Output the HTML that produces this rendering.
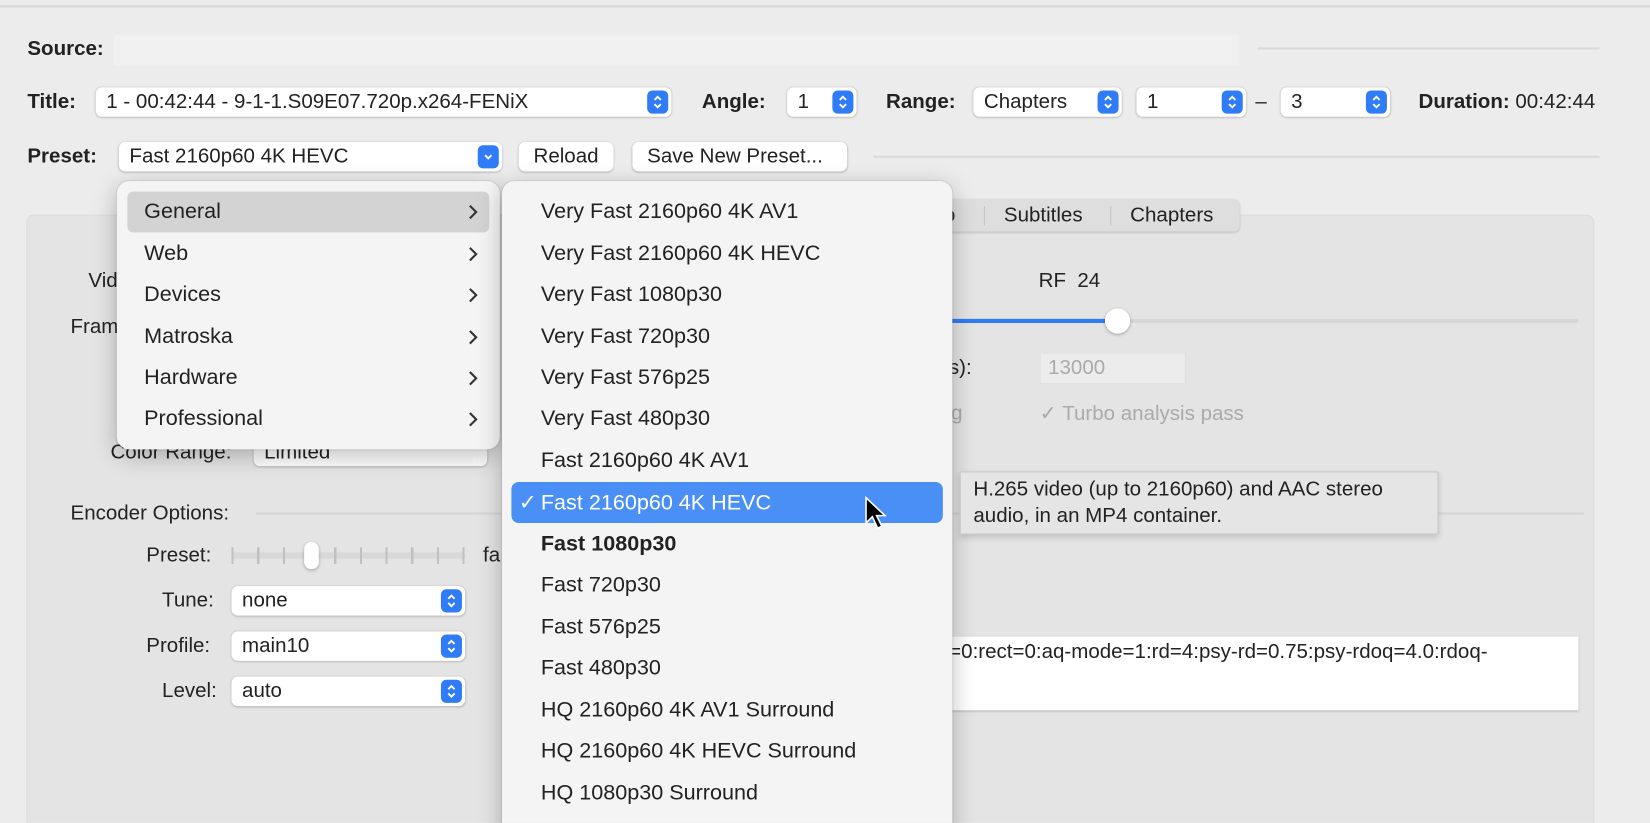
<!DOCTYPE html>
<html><head><meta charset="utf-8"><style>
html,body{margin:0;padding:0;width:1650px;height:823px;overflow:hidden;background:#ececec}
#clip{position:relative;width:1650px;height:823px;overflow:hidden}
#w{position:absolute;left:0;top:0;width:1568px;height:782px;overflow:hidden;transform:scale(1.0523);transform-origin:0 0;font-family:"Liberation Sans",sans-serif;color:#222;font-size:19.5px}
.a{position:absolute;white-space:nowrap}
.b{font-weight:bold}
.lbl{transform:translateY(-50%)}
.box{position:absolute;background:#fff;border-radius:6px;box-shadow:0 0.5px 2px rgba(0,0,0,.25)}
.box span{position:absolute;left:10px;top:50%;transform:translateY(-50%)}
.st{position:absolute;right:3px;top:3px;bottom:3px;width:20px;background:#2f7cf6;border-radius:5px}
.st svg{position:absolute;left:4px;top:50%;transform:translateY(-50%)}
.menu{position:absolute;background:#f4f4f4;border-radius:12px;box-shadow:0 6px 22px rgba(0,0,0,.25),0 0 0 1px rgba(0,0,0,.08)}
.mi{position:absolute;left:0;right:0;height:40px;line-height:40px;font-size:20.5px}
.ch{position:absolute;left:334px;top:13px}
</style></head><body><div id="clip"><div id="w">
<div class="a" style="left:0;top:5px;width:1568px;height:2px;background:#d8d8d8"></div>
<div class="a b lbl" style="left:26px;top:47px">Source:</div>
<div class="a" style="left:108px;top:33px;width:1070px;height:29px;background:#f0f0f0;border-radius:3px"></div>
<div class="a" style="left:1195px;top:45px;width:325px;height:2px;background:#dadada"></div>
<div class="a" style="left:830px;top:148px;width:690px;height:2px;background:#dadada"></div>

<div class="a b lbl" style="left:26px;top:97px">Title:</div>
<div class="box" style="left:91px;top:83px;width:547px;height:28px"><span>1 - 00:42:44 - 9-1-1.S09E07.720p.x264-FENiX</span><div class="st"><svg width="12" height="16" viewBox="0 0 12 16"><path d="M3 6l3-3 3 3M3 10l3 3 3-3" stroke="#fff" stroke-width="1.8" fill="none"/></svg></div></div>
<div class="a b lbl" style="left:667px;top:97px">Angle:</div>
<div class="box" style="left:748px;top:83px;width:66px;height:28px"><span>1</span><div class="st"><svg width="12" height="16" viewBox="0 0 12 16"><path d="M3 6l3-3 3 3M3 10l3 3 3-3" stroke="#fff" stroke-width="1.8" fill="none"/></svg></div></div>
<div class="a b lbl" style="left:842px;top:97px">Range:</div>
<div class="box" style="left:925px;top:83px;width:141px;height:28px"><span>Chapters</span><div class="st"><svg width="12" height="16" viewBox="0 0 12 16"><path d="M3 6l3-3 3 3M3 10l3 3 3-3" stroke="#fff" stroke-width="1.8" fill="none"/></svg></div></div>
<div class="box" style="left:1080px;top:83px;width:104px;height:28px"><span>1</span><div class="st"><svg width="12" height="16" viewBox="0 0 12 16"><path d="M3 6l3-3 3 3M3 10l3 3 3-3" stroke="#fff" stroke-width="1.8" fill="none"/></svg></div></div>
<div class="a lbl" style="left:1193px;top:97px">–</div>
<div class="box" style="left:1217px;top:83px;width:104px;height:28px"><span>3</span><div class="st"><svg width="12" height="16" viewBox="0 0 12 16"><path d="M3 6l3-3 3 3M3 10l3 3 3-3" stroke="#fff" stroke-width="1.8" fill="none"/></svg></div></div>
<div class="a lbl" style="left:1348px;top:97px"><b>Duration:</b> 00:42:44</div>

<div class="a b lbl" style="left:26px;top:149px">Preset:</div>
<div class="box" style="left:113px;top:135px;width:364px;height:28px"><span>Fast 2160p60 4K HEVC</span><div class="st"><svg width="12" height="16" viewBox="0 0 12 16"><path d="M3 6.5l3 3 3-3" stroke="#fff" stroke-width="1.8" fill="none"/></svg></div></div>
<div class="box" style="left:493px;top:135px;width:90px;height:28px"><span style="left:14px">Reload</span></div>
<div class="box" style="left:601px;top:135px;width:204px;height:28px"><span style="left:14px">Save New Preset...</span></div>

<div class="a" style="left:26px;top:205px;width:1488px;height:600px;background:#e4e4e4;border-radius:6px;box-shadow:0 0 0 1px #dcdcdc"></div>
<div class="a" style="left:600px;top:189px;width:578px;height:31px;background:#dedede;border-radius:6px;box-shadow:0 1px 2px rgba(0,0,0,.15)"></div>
<div class="a lbl" style="left:897px;top:205px">o</div>
<div class="a" style="left:935px;top:196px;width:1px;height:18px;background:#c4c4c4"></div>
<div class="a lbl" style="left:954px;top:205px">Subtitles</div>
<div class="a" style="left:1055px;top:196px;width:1px;height:18px;background:#c4c4c4"></div>
<div class="a lbl" style="left:1074px;top:205px">Chapters</div>

<div class="a lbl" style="left:84px;top:267px">Vid</div>
<div class="a lbl" style="left:67px;top:311px">Fram</div>
<div class="a lbl" style="left:105px;top:430px">Color Range:</div>
<div class="box" style="left:241px;top:417px;width:222px;height:26px"><span>Limited</span></div>
<div class="a lbl" style="left:987px;top:267px">RF&nbsp;&nbsp;24</div>
<div class="a" style="left:900px;top:303px;width:162px;height:4px;background:#2f7cf6;border-radius:2px"></div>
<div class="a" style="left:1062px;top:303px;width:438px;height:4px;background:#d6d6d6;border-radius:2px"></div>
<div class="a" style="left:1050px;top:293px;width:24px;height:24px;background:#fff;border-radius:50%;box-shadow:0 1px 3px rgba(0,0,0,.3)"></div>
<div class="a lbl" style="left:880px;top:350px">ops):</div>
<div class="a" style="left:988px;top:335px;width:137px;height:28px;background:#ececec;border:1px solid #e0e0e0"></div>
<div class="a lbl" style="left:996px;top:350px;color:#aaa">13000</div>
<div class="a lbl" style="left:893px;top:393px;color:#aaa">ng</div>
<div class="a lbl" style="left:988px;top:393px;color:#aaa">✓ Turbo analysis pass</div>

<div class="a lbl" style="left:67px;top:488px">Encoder Options:</div>
<div class="a" style="left:243px;top:487px;width:1262px;height:2px;background:#d6d6d6"></div>
<div class="a lbl" style="left:139px;top:528px">Preset:</div>
<div class="a" style="left:220px;top:525px;width:222px;height:6px;background:#d8d8d8;border-radius:3px"></div>
<div class="a" style="left:220px;top:520px;width:222px;height:16px;background:repeating-linear-gradient(90deg,#c0c0c0 0 2px,transparent 2px 24.4px)"></div>
<div class="a" style="left:289px;top:515px;width:14px;height:26px;background:#fff;border-radius:7px;box-shadow:0 1px 3px rgba(0,0,0,.3)"></div>
<div class="a lbl" style="left:459px;top:528px">fa</div>
<div class="a lbl" style="left:154px;top:571px">Tune:</div>
<div class="box" style="left:220px;top:557px;width:222px;height:28px"><span>none</span><div class="st"><svg width="12" height="16" viewBox="0 0 12 16"><path d="M3 6l3-3 3 3M3 10l3 3 3-3" stroke="#fff" stroke-width="1.8" fill="none"/></svg></div></div>
<div class="a lbl" style="left:139px;top:614px">Profile:</div>
<div class="box" style="left:220px;top:600px;width:222px;height:28px"><span>main10</span><div class="st"><svg width="12" height="16" viewBox="0 0 12 16"><path d="M3 6l3-3 3 3M3 10l3 3 3-3" stroke="#fff" stroke-width="1.8" fill="none"/></svg></div></div>
<div class="a lbl" style="left:154px;top:657px">Level:</div>
<div class="box" style="left:220px;top:643px;width:222px;height:28px"><span>auto</span><div class="st"><svg width="12" height="16" viewBox="0 0 12 16"><path d="M3 6l3-3 3 3M3 10l3 3 3-3" stroke="#fff" stroke-width="1.8" fill="none"/></svg></div></div>
<div class="a" style="left:880px;top:605px;width:620px;height:70px;background:#fff;box-shadow:0 1px 2px rgba(0,0,0,.2)"></div>
<div class="a lbl" style="left:902px;top:620px">=0:rect=0:aq-mode=1:rd=4:psy-rd=0.75:psy-rdoq=4.0:rdoq-</div>

<div class="menu" style="left:111px;top:172px;width:364px;height:255px">
<div class="a" style="left:10px;top:10px;width:344px;height:39px;background:#d3d3d3;border-radius:6px"></div>
<div class="mi" style="top:9px"><span style="position:absolute;left:26px">General</span><svg class="ch" width="9" height="15" viewBox="0 0 9 15"><path d="M1.5 1.5l6 6-6 6" stroke="#333" stroke-width="2" fill="none"/></svg></div>
<div class="mi" style="top:49px"><span style="position:absolute;left:26px">Web</span><svg class="ch" width="9" height="15" viewBox="0 0 9 15"><path d="M1.5 1.5l6 6-6 6" stroke="#333" stroke-width="2" fill="none"/></svg></div>
<div class="mi" style="top:88px"><span style="position:absolute;left:26px">Devices</span><svg class="ch" width="9" height="15" viewBox="0 0 9 15"><path d="M1.5 1.5l6 6-6 6" stroke="#333" stroke-width="2" fill="none"/></svg></div>
<div class="mi" style="top:128px"><span style="position:absolute;left:26px">Matroska</span><svg class="ch" width="9" height="15" viewBox="0 0 9 15"><path d="M1.5 1.5l6 6-6 6" stroke="#333" stroke-width="2" fill="none"/></svg></div>
<div class="mi" style="top:167px"><span style="position:absolute;left:26px">Hardware</span><svg class="ch" width="9" height="15" viewBox="0 0 9 15"><path d="M1.5 1.5l6 6-6 6" stroke="#333" stroke-width="2" fill="none"/></svg></div>
<div class="mi" style="top:206px"><span style="position:absolute;left:26px">Professional</span><svg class="ch" width="9" height="15" viewBox="0 0 9 15"><path d="M1.5 1.5l6 6-6 6" stroke="#333" stroke-width="2" fill="none"/></svg></div>
</div>
<div class="menu" style="left:477px;top:172px;width:428px;height:640px">
<div class="a" style="left:9px;top:286px;width:410px;height:39px;background:#4a8ff5;border-radius:7px"></div>
<div class="mi" style="top:9px;padding-left:37px">Very Fast 2160p60 4K AV1</div>
<div class="mi" style="top:49px;padding-left:37px">Very Fast 2160p60 4K HEVC</div>
<div class="mi" style="top:88px;padding-left:37px">Very Fast 1080p30</div>
<div class="mi" style="top:128px;padding-left:37px">Very Fast 720p30</div>
<div class="mi" style="top:167px;padding-left:37px">Very Fast 576p25</div>
<div class="mi" style="top:206px;padding-left:37px">Very Fast 480p30</div>
<div class="mi" style="top:246px;padding-left:37px">Fast 2160p60 4K AV1</div>
<div class="mi" style="top:286px;padding-left:37px;color:#fff"><span style="position:absolute;left:16px">✓</span>Fast 2160p60 4K HEVC</div>
<div class="mi" style="top:325px;padding-left:37px;font-weight:bold">Fast 1080p30</div>
<div class="mi" style="top:364px;padding-left:37px">Fast 720p30</div>
<div class="mi" style="top:404px;padding-left:37px">Fast 576p25</div>
<div class="mi" style="top:443px;padding-left:37px">Fast 480p30</div>
<div class="mi" style="top:483px;padding-left:37px">HQ 2160p60 4K AV1 Surround</div>
<div class="mi" style="top:522px;padding-left:37px">HQ 2160p60 4K HEVC Surround</div>
<div class="mi" style="top:562px;padding-left:37px">HQ 1080p30 Surround</div>
</div>
<svg class="a" style="left:821px;top:471px" width="22" height="34" viewBox="0 0 22 34"><path d="M2 2v24l6-6 5 11 4-2-5-10h8z" fill="#000" stroke="#fff" stroke-width="1.5"/></svg>

<div class="a" style="left:912px;top:448px;width:453px;height:58px;background:#e5e5e5;border:1px solid #c6c6c6;box-shadow:0 3px 6px rgba(0,0,0,.15)"></div>
<div class="a" style="left:925px;top:453px;font-size:19.5px;line-height:25px">H.265 video (up to 2160p60) and AAC stereo<br>audio, in an MP4 container.</div>
</div></div></body></html>
